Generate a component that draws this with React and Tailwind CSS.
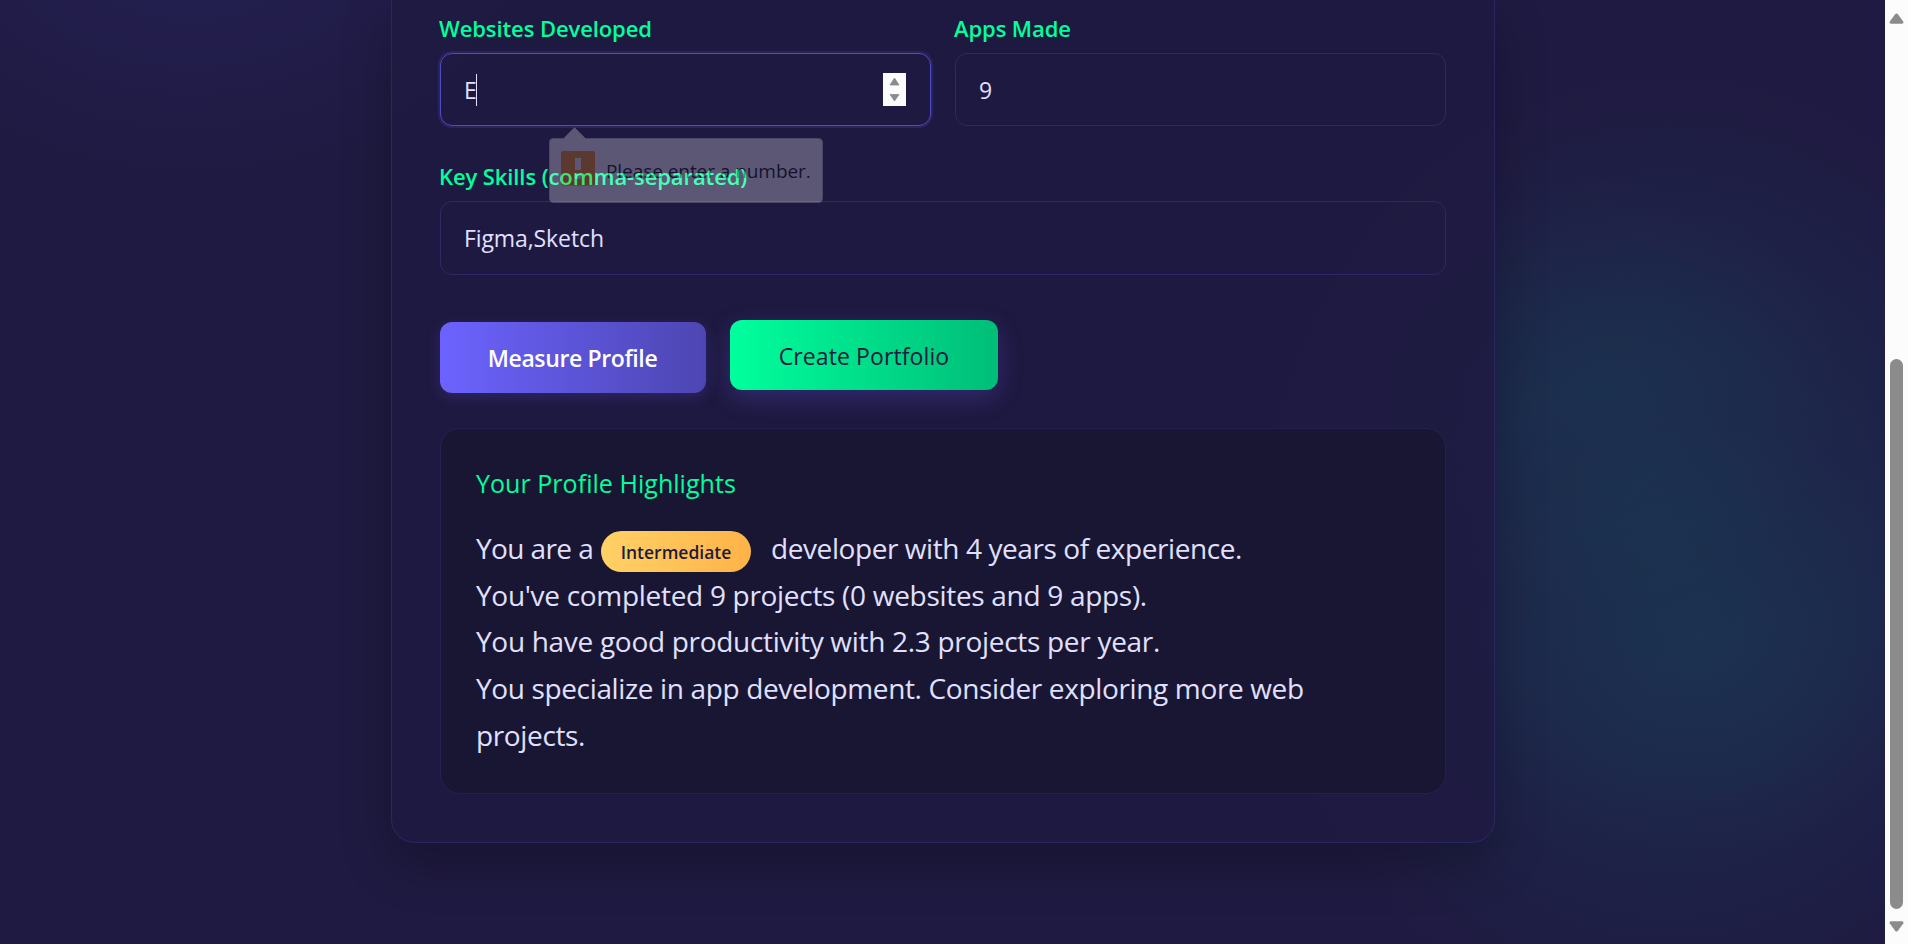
function Label({ children }) {
  return (
    <div className="-ml-px h-7 whitespace-nowrap text-[22px] leading-7 font-semibold tracking-[-0.1px] text-[#00ff9d]">
      {children}
    </div>
  );
}

function ValidationTooltip() {
  return (
    <div className="absolute top-[73px] left-[108px] z-10 h-[76px] w-[274px] opacity-[0.27]">
      <svg className="absolute inset-0" width="274" height="76" viewBox="0 0 274 76">
        <path
          d="M4.500 11.500H14.500L25.500 0.500L36.500 11.500H269.500a4 4 0 0 1 4 4V71.500a4 4 0 0 1-4 4H4.500a4 4 0 0 1-4-4V15.500a4 4 0 0 1 4-4z"
          fill="#fff"
          stroke="#c4c4c4"
        />
        <rect x="12" y="24" width="34" height="34.500" rx="2" fill="#ff9000" />
        <rect x="26" y="31" width="6" height="12" fill="#fff" />
        <rect x="26" y="47" width="6" height="5" fill="#fff" />
      </svg>
      <span className="absolute top-[30px] left-[57px] text-[19px] leading-7 tracking-[-0.06px] whitespace-nowrap text-black">
        Please enter a number.
      </span>
    </div>
  );
}

function Spinner() {
  return (
    <svg className="h-[33px] w-[23px] bg-[#fcfcfc]" viewBox="0 0 23 33" fill="#8b8b8b">
      <path d="M11.500 5L16 12H7z" stroke="#8b8b8b" strokeWidth="0.8" strokeLinejoin="round" />
      <path d="M11.500 28L16 21.500H7z" stroke="#8b8b8b" strokeWidth="0.8" strokeLinejoin="round" />
    </svg>
  );
}

function Scrollbar() {
  return (
    <div className="flex h-full w-[23px] shrink-0 flex-col items-center bg-[#fcfcfc] pt-[13px]">
      <svg width="15" height="11" viewBox="0 0 16 11" fill="#8b8b8b">
        <path d="M6.700 0.800Q8-0.600 9.300 0.800L15.300 9Q15.800 10.800 14 11H2Q0.200 10.800 0.700 9z" />
      </svg>
      <div className="mt-[335px] h-[550px] w-[13px] rounded-full bg-[#8b8b8b]" />
      <svg className="mt-[12px]" width="15" height="11" viewBox="0 0 16 11" fill="#8b8b8b">
        <path d="M6.700 10.200Q8 11.600 9.300 10.200L15.300 2Q15.800 0.200 14 0H2Q0.200 0.200 0.700 2z" />
      </svg>
    </div>
  );
}

export default function App() {
  return (
    <div className="flex h-[944px] w-[1908px] overflow-hidden bg-[#1f1a41] font-['Open_Sans','Noto_Sans',sans-serif] text-[#e0e0ff]">
      <main className="h-full flex-1 bg-[radial-gradient(ellipse_360px_280px_at_190px_-90px,rgba(60,60,160,0.2),transparent),radial-gradient(ellipse_250px_220px_at_1595px_390px,rgba(0,212,157,0.055),transparent),radial-gradient(ellipse_260px_220px_at_1700px_640px,rgba(0,212,157,0.055),transparent),radial-gradient(ellipse_420px_490px_at_1670px_555px,rgba(0,200,190,0.09),rgba(0,200,190,0.07)_45%,rgba(0,200,190,0.025)_80%,transparent)]">
        <section className="ml-[391px] h-[843px] w-[1104px] rounded-b-3xl border-x border-b border-[#2b265f] bg-[#1f1a41]/85 px-12 pt-[14px] shadow-[0_20px_50px_rgba(0,0,0,0.25)]">
          <div className="grid grid-cols-2 gap-6">
            <div>
              <Label>Websites Developed</Label>
              <div className="relative mt-[11px] flex h-[73px] items-center rounded-xl border border-[#514ac4] pr-6 pl-[23px] text-[23px] shadow-[0_0_0_2px_rgba(108,99,255,0.15)]">
                <span className="w-[12px] pt-px">E</span>
                <span className="h-8 w-px bg-[#e0e0ff]" />
                <span className="ml-auto">
                  <Spinner />
                </span>
                <ValidationTooltip />
              </div>
            </div>
            <div>
              <Label>Apps Made</Label>
              <div className="mt-[11px] flex h-[73px] items-center rounded-xl border border-[#2f2868] pt-px pl-[23px] text-[23px]">
                9
              </div>
            </div>
          </div>

          <div className="mt-9">
            <Label>Key Skills (comma-separated)</Label>
            <div className="mt-[11px] flex h-[74px] items-center rounded-xl border border-[#2f2868] pt-px pl-[23px] text-[23px] tracking-[-0.1px]">
              Figma,Sketch
            </div>
          </div>

          <div className="mt-[45px] flex gap-6">
            <div className="mt-[2px] flex h-[71px] w-[266px] items-center justify-center rounded-xl bg-linear-to-r from-[#6c63ff] to-[#4d46b2] pt-[2px] pr-px text-[23px] font-semibold tracking-[-0.38px] text-white shadow-[0_4px_15px_rgba(108,99,255,0.2)]">
              Measure Profile
            </div>
            <div className="flex h-[70px] w-[268px] items-center justify-center rounded-xl bg-linear-to-r from-[#00ff9d] to-[#00be78] pt-[2px] text-[23px] font-medium tracking-[0.1px] text-[#1a1a3e] shadow-[0_8px_25px_rgba(108,99,255,0.25)]">
              Create Portfolio
            </div>
          </div>

          <div className="mt-[35px] h-[366px] rounded-[20px] border border-[#262051] bg-[#191633] px-[35px] pt-[37px]">
            <h3 className="text-[25px] leading-[34px] tracking-[0.04px] text-[#00ff9d]">Your Profile Highlights</h3>
            <div className="mt-[25px] text-[28px] leading-[46.7px] tracking-[-0.36px] whitespace-nowrap">
              <div className="flex h-[46.7px] items-start">
                <span className="w-[125px] tracking-[-0.6px]">You are a</span>
                <span className="mt-[6px] flex h-[41px] w-[150px] items-center justify-center rounded-full bg-linear-to-r from-[#ffd166] to-[#ffb347] pt-[3px] text-[17.5px] leading-none font-semibold tracking-normal text-[#1f1a3c]">
                  Intermediate
                </span>
                <span className="ml-5 tracking-[-0.42px]">developer with 4 years of experience.</span>
              </div>
              <p className="tracking-[-0.3px]">You've completed 9 projects (0 websites and 9 apps).</p>
              <p className="tracking-[-0.3px]">You have good productivity with 2.3 projects per year.</p>
              <p>
                You specialize in app development. Consider exploring more web
                <br />
                projects.
              </p>
            </div>
          </div>
        </section>
      </main>
      <Scrollbar />
    </div>
  );
}
